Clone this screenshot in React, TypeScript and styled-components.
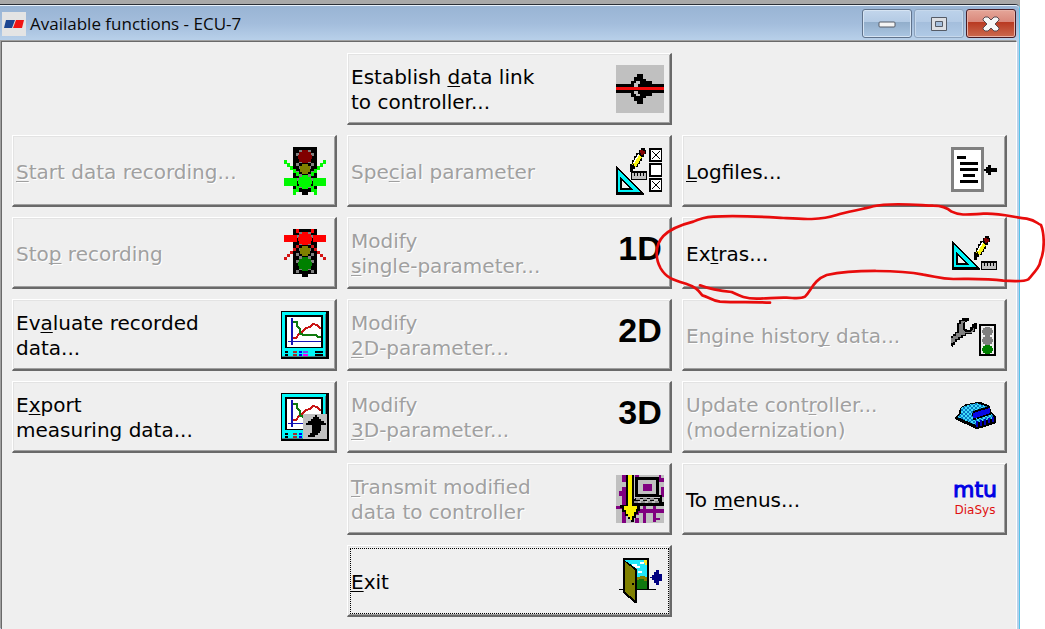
import React from "react";
import styled, { createGlobalStyle, css } from "styled-components";

const GlobalStyle = createGlobalStyle`
  *, *::before, *::after { box-sizing: border-box; }
  body { margin: 0; background: #fff; }
`;

const Desktop = styled.div`
  display: flex;
  flex-direction: column;
  min-height: 100vh;
  margin-right: 25px;
  padding-top: 4px;
  background: #a9a9a9;
`;

const Window = styled.main`
  flex: 1;
  display: flex;
  flex-direction: column;
  border-top: 1px solid #2b2f36;
  border-right: 1px solid #55c4ea;
  border-top-right-radius: 5px;
  background: #b9d1ea;
`;

const TitleBar = styled.header`
  display: flex;
  align-items: center;
  height: 36px;
  padding: 0 3px 0 2px;
  border-top: 1px solid #eaf2fb;
  border-top-right-radius: 4px;
  background: linear-gradient(#99b4d4, #a3bddc 50%, #b9d1ea);
`;

const AppIcon = styled.span`
  display: flex;
  width: 24px;
  height: 24px;
  background: #e4e4e4;
`;

const Title = styled.h1`
  flex: 1;
  margin: 0;
  padding-left: 4px;
  font: 400 17px/24px "Open Sans", "Noto Sans", sans-serif;
  color: #0a0a0a;
`;

const WindowControls = styled.div`
  display: flex;
  gap: 2px;
`;

const controlTones = {
  normal: css`
    border-color: #60738c;
    background: linear-gradient(#c3d6ec, #b3cae4 45%, #92aecb 46%, #abc6e2);
    box-shadow: inset 0 0 0 1px #d6e4f3;
  `,
  muted: css`
    border-color: #8da3bd;
    background: linear-gradient(#bcd2ea, #b3cae5 45%, #a4bedc 46%, #b0cae6);
    box-shadow: inset 0 0 0 1px #c6d8ec;
  `,
  close: css`
    border-color: #471b25;
    background: linear-gradient(#e5a699, #d9877a 45%, #b93a22 46%, #cb6a4f);
    box-shadow: inset 0 0 0 1px #e8b1a6;
  `,
};

const ControlButton = styled.button<{ $tone: keyof typeof controlTones }>`
  display: flex;
  align-items: center;
  justify-content: center;
  width: 50px;
  height: 29px;
  padding: 0;
  border: 1px solid;
  border-radius: 3px;
  ${({ $tone }) => controlTones[$tone]}
`;

const Client = styled.section`
  flex: 1;
  margin: 0 2px 0 1px;
  padding: 11px 9px 11px 10px;
  border: 1px solid #696969;
  border-right-color: #fff;
  border-bottom: 0;
  box-shadow: -1px -1px 0 #a0a0a0;
  background: #efefef;
`;

const FunctionGrid = styled.div`
  display: grid;
  grid-template-columns: repeat(3, 1fr);
  grid-auto-rows: 72px;
  gap: 10px;
`;

const Cell = styled.div<{ $column: number; $row: number }>`
  position: relative;
  display: flex;
  grid-column: ${({ $column }) => $column};
  grid-row: ${({ $row }) => $row};
`;

const FunctionButton = styled.button<{ $focused?: boolean }>`
  flex: 1;
  display: flex;
  align-items: center;
  justify-content: space-between;
  padding: 0 6px 0 1px;
  border: solid;
  border-width: 1px 2px 2px 1px;
  border-color: #fff #696969 #696969 #fff;
  background: #efefef;
  box-shadow: inset 1px 1px 0 #e3e3e3, inset -1px -1px 0 #a0a0a0;
  font: 400 20px/25px "DejaVu Sans", Verdana, sans-serif;
  text-align: left;
  color: #000;
  outline: ${({ $focused }) => ($focused ? "1px dotted #000" : "none")};
  outline-offset: -4px;

  &:disabled {
    color: #a0a0a0;
    text-shadow: 1px 1px 0 #fff;
  }
`;

const Label = styled.span`
  padding: 3px 0 0 2px;
`;

const Line = styled.span`
  display: block;
`;

const Mnemonic = styled.span`
  text-decoration: underline;
  text-decoration-thickness: 1px;
  text-underline-offset: 2px;
  text-decoration-skip-ink: none;
`;

const Icon = styled.svg`
  flex: none;
  width: 48px;
  height: 48px;
  overflow: visible;
  text-shadow: none;
  shape-rendering: crispEdges;
`;

const Marking = styled.svg`
  position: absolute;
  left: -42px;
  top: -27px;
  width: 405px;
  height: 130px;
  z-index: 1;
  pointer-events: none;
`;

/* ---------- icons ---------- */

const PlugIcon = () => (
  <Icon viewBox="0 0 48 48" aria-hidden="true">
    <path fill="#c0c0c0" d="M0 0h48v48H0z" />
    <path d="M0 19h15v-3h3v-4h3V9h6v5h3v2h6v3h12v9H36v3h-6v2h-3v6h-6v-3h-3v-4h-3v-4H0z" />
    <path fill="#c0c0c0" d="M18 18h2v-2h4v3h-2v3h-4zM18 26h4v3h2v2h-4v-2h-2z" />
    <path fill="#f00d0d" d="M0 22h48v3H0z" />
  </Icon>
);

const TrafficIcon = ({ go }: { go?: boolean }) => (
  <Icon viewBox="0 0 48 48" aria-hidden="true">
    <path d="M12 0h24v45h-9v3h-6v-3h-9z" />
    <g fill="#808080">
      {[3, 6, 13, 16, 19, 24, 27, 31, 38, 41].map((y, i) => (
        <React.Fragment key={y}>
          <path d={`M${i % 2 ? 15 : 18} ${y}h3v3h-3z`} />
          <path d={`M${i % 2 ? 30 : 27} ${y}h3v3h-3z`} />
        </React.Fragment>
      ))}
    </g>
    {go ? (
      <g fill="#00f800">
        <path d="M3 31h13v8H3zM32 31h13v8H32z" />
        <path d="M3 13h3v3h3v3h3v3h3v3h3v4h-3v-3h-3v-3h-3v-3H6v-3H3zM45 13h-3v3h-3v3h-3v3h-3v3h-3v4h3v-3h3v-3h3v-3h3v-3h3zM12 42h3v-3h3v6h-3v3h-3zM36 42h-3v-3h-3v6h3v3h3z" />
      </g>
    ) : (
      <g fill="#f00">
        <path d="M3 6h13v7H3zM32 6h13v7H32zM15 0h3v4h-3zM30 0h3v4h-3z" />
        <path
          fill="#d41414"
          d="M3 31v-3h3v-3h3v-3h3v-3h3v-3h3v3h-3v3h-3v3H9v3H6v3zM45 31v-3h-3v-3h-3v-3h-3v-3h-3v-3h-3v3h3v3h3v3h3v3h3v3z"
        />
      </g>
    )}
    <path
      fill={go ? "#800000" : "#f00"}
      d="M21 3h6v2h3v3h1v4h-1v3h-3v1h-6v-1h-3v-3h-1V8h1V5h3z"
    />
    <path fill="#808000" d="M21 17h6v2h2v6h-2v2h-6v-2h-2v-6h2z" />
    <path
      fill={go ? "#00f800" : "#008000"}
      d="M21 28h6v2h3v3h1v4h-1v3h-3v2h-6v-2h-3v-3h-1v-4h1v-3h3z"
    />
  </Icon>
);

const MonitorIcon = ({ exporting }: { exporting?: boolean }) => (
  <Icon viewBox="0 0 48 48" aria-hidden="true">
    <path d="M0 0h48v48H0z" />
    <path fill="#00f8f8" d="M1 1h44v45H1z" />
    <path fill="#40888c" d="M44 3h1v43H1v-1h43z" />
    <path d="M4 4h38v33H4z" />
    <path fill="#fff" d="M6 6h34v30H6z" />
    <path fill="#1414b4" d="M10 7h2v27h-2zM7 30h33v1H7z" />
    <g fill="none" strokeWidth="2">
      <path stroke="#c81414" d="M12 27h3l3-4 3-2 4-4 4-1 3-3 4 1 4 4" />
      <path stroke="#107a10" d="M12 11h4v4l3 3v4l3 2h13l2 2h3" />
    </g>
    <path d="M4 40h3v2H4zM4 43h3v2H4zM34 40h8v2h-8zM34 43h8v2h-8z" />
    <path fill="#a03030" d="M12 40h4v2h-4zM12 43h4v2h-4z" />
    <path fill="#0000f8" d="M18 40h3v2h-3zM18 43h3v2h-3z" />
    <path fill="#7048f0" d="M22 40h5v2h-5z" />
    <path fill="#f000f0" d="M22 43h5v2h-5z" />
    {exporting && (
      <>
        <path fill="#c0c0c0" d="M22 21h24v25H22z" />
        <path d="M34 22h2v2h2v2h2v2h3v2h2v2h-5v6h-1v2h-2v2h-3v2h-7v-2h2v-2h2v-8h-6v-2h2v-2h3v-2h2v-2h2z" />
      </>
    )}
  </Icon>
);

const Triangle = ({ x, y }: { x: number; y: number }) => (
  <g transform={`translate(${x} ${y})`}>
    <path d="M0 0l28 27v2H0z" />
    <path fill="#00f4f8" d="M2 4l22 22H2z" />
    <path d="M4 11l14 13H4z" />
    <path fill="#efefef" d="M6 15l7 7H6z" />
  </g>
);

const Pencil = ({ x, y }: { x: number; y: number }) => (
  <g transform={`translate(${x} ${y})`}>
    <path d="M0 23v-7h2v-4h2V8h2V5h3V2h2V0h4v2h1v4h-2v3h-2v4h-2v3H8v3H5v2H3v3H0z" />
    <path fill="#f8f410" d="M2 17l6-11 4 3-6 10-2-1v-2z" />
    <path fill="#fff" d="M3 15l5-9 1 1-5 9z" />
    <path fill="#800000" d="M10 2h3v1h2v3h-2v1h-2V5h-1z" />
  </g>
);

const Ruler = ({ x, y }: { x: number; y: number }) => (
  <g transform={`translate(${x} ${y})`}>
    <path d="M0 0h16v9H0z" />
    <path fill="#c0c0c0" d="M1 2h14v6H1z" />
    <path d="M3 2h1v3H3zM6 2h1v3H6zM9 2h1v3H9zM12 2h1v3h-1z" />
  </g>
);

const SpecialIcon = () => (
  <Icon viewBox="0 0 48 48" aria-hidden="true">
    <Triangle x={0} y={19} />
    <Ruler x={15} y={24} />
    <Pencil x={14} y={1} />
    {[1, 16, 31].map((y) => (
      <g key={y} transform={`translate(33 ${y})`}>
        <path d="M0 0h13v14H0z" />
        <path fill="#fff" d="M2 2h10v10H2z" />
        {y !== 16 && <path stroke="#000" d="M3 3l8 8M11 3l-8 8" />}
      </g>
    ))}
  </Icon>
);

const ExtrasIcon = () => (
  <Icon viewBox="0 0 48 48" aria-hidden="true">
    <Triangle x={1} y={12} />
    <Ruler x={30} y={32} />
    <Pencil x={23} y={7} />
  </Icon>
);

const LogIcon = () => (
  <Icon viewBox="0 0 48 48" aria-hidden="true">
    <path fill="#808080" d="M0 0h33v45H0z" />
    <path fill="#fff" d="M3 3h27v39H3z" />
    <path d="M6 9h9v3H6zM9 15h18v3H9zM9 21h18v3H9zM12 27h12v3H12zM9 33h18v3H9z" />
    <path d="M33 22h2v-2h2v-2h3v3h6v4h-6v3h-3v-2h-2v-2h-2z" />
  </Icon>
);

const WrenchIcon = () => (
  <Icon viewBox="0 0 48 48" aria-hidden="true">
    <path d="M0 34v-9h2v-2h2v-2h2v-9h2v-3h3V7h7v3h-2v1h-2v7h2v1h3v-3h2v-3h2v-1h3v6h-2v3h-3v2h-6v2h-3v2H9v2H6v2H4v3H2v3z" />
    <path
      fill="#808080"
      d="M0 32v-5h2v-2h3v-3h3v-9h2v-3h4l-2 2v6l2 3h5l3-2v-2h1v2l-3 3h-6v2h-4v2H7v2H4v3z"
    />
    <path d="M28 13h17v32H28z" />
    <path fill="#efefef" d="M30 15h13v28H30z" />
    {[16, 25, 34].map((y) => (
      <path
        key={y}
        fill={y === 34 ? "#008000" : "#808080"}
        d={`M34 ${y}h5v1h2v2h1v3h-1v2h-2v1h-5v-1h-2v-2h-1v-3h1v-2h2z`}
      />
    ))}
  </Icon>
);

const ChipIcon = () => (
  <Icon viewBox="0 0 48 48" aria-hidden="true">
    <defs>
      <pattern id="weave" width="4" height="4" patternUnits="userSpaceOnUse">
        <path fill="#0a78c4" d="M0 0h4v4H0z" />
        <path fill="#40e0f8" d="M0 0h2v2H0zM2 2h2v2H2z" />
      </pattern>
    </defs>
    <path d="M4 24l4-4 1-5 6-4 7-1 4-1h4l9 4 1 6 5 5v6l-5 2-4 1-5 2-6 1L4 26z" />
    <path
      fill="url(#weave)"
      d="M6 24l4-4V15l7-3 9-2 11 4-15 4-1 5 6 3 14-5 2 4-14 5-4 2z"
    />
    <path fill="#0808e8" d="M22 20l17-5v5l-14 5h-3z" />
    <path d="M22 18l17-5v2l-17 5zM22 25h3v2h-3z" />
    <path fill="#0000c0" d="M25 28h2v6h-2zM29 27h2v6h-2zM33 26h2v6h-2zM37 25h2v5h-2zM41 24h2v5h-2z" />
    <path d="M27 29h2v5h-2zM31 28h2v5h-2zM35 27h2v5h-2zM39 26h2v5h-2z" />
  </Icon>
);

const TransmitIcon = () => (
  <Icon viewBox="0 0 48 48" aria-hidden="true">
    <path fill="#c0c0c0" d="M0 0h48v48H0z" />
    <path
      fill="#800080"
      d="M6 0h4v48H6zM3 16h4v5H3zM0 31h6v3H0zM19 0h4v48h-4zM27 30h3v18h-3zM37 30h3v17h-3zM23 34h25v4H23zM43 3h5v4h-5zM43 0h2v5h-2zM45 12h3v10h-3zM40 43h4v2h-4z"
    />
    <path fill="#c0c0c0" d="M6 7h4v5H6zM19 40h4v3h-4zM30 41h4v3h-4z" />
    <path d="M19 2h24v18h3v7h2v4H18v-4h-2v-3h3z" />
    <path fill="#c0c0c0" d="M22 5h18v14H22zM19 22h25v1H19z" />
    <path fill="#800080" d="M27 9h9v7h-9z" />
    <path fill="#909090" d="M20 23h4v2h-4zM27 23h4v2h-4zM34 23h4v2h-4zM18 26h4v2h-4zM25 26h4v2h-4zM32 26h4v2h-4zM39 26h4v2h-4z" />
    <path fill="#c0c0c0" d="M24 24h3v2h-3zM31 24h3v2h-3zM38 24h4v2h-4zM22 26h3v2h-3zM29 26h3v2h-3zM36 26h3v2h-3z" />
    <path d="M10 0h8v30h6v6h-2v3h-2v4h-2v4h-3v-3h-3v-3H9v-4H6v-4H4v-3h6z" />
    <path fill="#f8f000" d="M12 0h4v31h5v3h-1v3h-2v4h-2v4h-2v-3h-2v-3h-2v-4H8v-4h4z" />
  </Icon>
);

const ExitIcon = () => (
  <Icon viewBox="0 0 48 48" aria-hidden="true">
    <path d="M7 1h26v31h7v1H3v-1h4z" />
    <path fill="#20e8f8" d="M9 3h22v29H9z" />
    <path fill="#fff" d="M16 7h5v2h3v2h-6V9h-2zM24 5h4v2h-4zM22 14h4v2h-4z" />
    <path fill="#f8e820" d="M28 3h3v5h-2V6h-1z" />
    <path fill="#808000" d="M21 20h3v-1h5v1h2v6H21z" />
    <path fill="#107810" d="M21 23h2v-1h5v2h3v8H21z" />
    <path d="M7 2l14 10v34h-2L7 36z" />
    <path fill="#808000" d="M9 5l10 8v30L9 35z" />
    <path d="M16 26h2v2h-2z" />
    <path fill="#000080" d="M34 20h2v-2h2v-3h2v-2h3v4h3v7h-3v4h-3v-2h-2v-3h-2v-2h-2z" />
  </Icon>
);

const DimensionIcon = ({ text }: { text: string }) => (
  <Icon viewBox="0 0 48 48">
    <text
      x="24"
      y="31"
      textAnchor="middle"
      fontFamily="'Liberation Sans', Arial, sans-serif"
      fontSize="34"
      fontWeight="700"
    >
      {text}
    </text>
  </Icon>
);

const MtuIcon = () => (
  <Icon viewBox="0 0 48 48" fontFamily="'DejaVu Sans', Verdana, sans-serif" textAnchor="middle">
    <text x="24" y="22" fontSize="22" fill="#0000e4" stroke="#0000e4">
      mtu
    </text>
    <text x="24" y="39" fontSize="12" fill="#e01010">
      DiaSys
    </text>
  </Icon>
);

/* ---------- functions ---------- */

type FunctionEntry = {
  column: number;
  row: number;
  /* an ampersand stands before the letter that is the access key */
  label: string;
  icon: React.ReactNode;
  disabled?: boolean;
  focused?: boolean;
  marked?: boolean;
};

const functions: FunctionEntry[] = [
  { column: 2, row: 1, label: "Establish &data link\nto controller...", icon: <PlugIcon /> },
  { column: 1, row: 2, label: "&Start data recording...", icon: <TrafficIcon go />, disabled: true },
  { column: 2, row: 2, label: "Spe&cial parameter", icon: <SpecialIcon />, disabled: true },
  { column: 3, row: 2, label: "&Logfiles...", icon: <LogIcon /> },
  { column: 1, row: 3, label: "Sto&p recording", icon: <TrafficIcon />, disabled: true },
  { column: 2, row: 3, label: "Modify\n&single-parameter...", icon: <DimensionIcon text="1D" />, disabled: true },
  { column: 3, row: 3, label: "Ex&tras...", icon: <ExtrasIcon />, marked: true },
  { column: 1, row: 4, label: "Ev&aluate recorded\ndata...", icon: <MonitorIcon /> },
  { column: 2, row: 4, label: "Modify\n&2D-parameter...", icon: <DimensionIcon text="2D" />, disabled: true },
  { column: 3, row: 4, label: "Engine histor&y data...", icon: <WrenchIcon />, disabled: true },
  { column: 1, row: 5, label: "E&xport\nmeasuring data...", icon: <MonitorIcon exporting /> },
  { column: 2, row: 5, label: "Modify\n&3D-parameter...", icon: <DimensionIcon text="3D" />, disabled: true },
  { column: 3, row: 5, label: "Update cont&roller...\n(modernization)", icon: <ChipIcon />, disabled: true },
  { column: 2, row: 6, label: "&Transmit modified\ndata to controller", icon: <TransmitIcon />, disabled: true },
  { column: 3, row: 6, label: "To &menus...", icon: <MtuIcon /> },
  { column: 2, row: 7, label: "&Exit", icon: <ExitIcon />, focused: true },
];

const LabelText = ({ text }: { text: string }) => (
  <Label>
    {text.split("\n").map((line) => {
      const [before, after] = line.split("&");
      return (
        <Line key={line}>
          {before}
          {after && <Mnemonic>{after[0]}</Mnemonic>}
          {after && after.slice(1)}
        </Line>
      );
    })}
  </Label>
);

const RedMarking = () => (
  <Marking viewBox="0 0 1215 390" aria-hidden="true">
    <path
      fill="none"
      stroke="#e80c0c"
      strokeWidth="8"
      strokeLinecap="round"
      strokeLinejoin="round"
      d="M180 286C210 298 240 303 275 306C300 318 315 326 350 326C390 325 410 322 440 323C465 324 480 328 495 320C515 300 520 270 560 255C640 238 780 240 850 254C890 260 900 267 940 267C1000 267 1040 265 1090 272C1120 274 1150 276 1165 268C1185 245 1200 230 1202 210C1215 180 1213 130 1203 105C1190 100 1190 92 1160 86C1120 82 1080 68 1030 71C990 73 960 78 935 65C920 52 905 47 880 47C830 45 750 36 700 49C660 60 620 65 590 75C540 92 480 87 430 84C360 80 290 75 220 80C190 82 175 88 160 95C120 105 90 118 70 138C45 165 45 205 62 235C80 265 100 270 140 282C165 290 175 300 187 316C205 320 215 332 240 335C290 338 340 335 390 338"
    />
  </Marking>
);

export default function App() {
  return (
    <>
      <GlobalStyle />
      <Desktop>
        <Window>
          <TitleBar>
            <AppIcon>
              <svg viewBox="0 0 24 24" aria-hidden="true">
                <path fill="#1c4692" d="M4 8h9l-3 8H2z" />
                <path fill="#f01414" d="M14 8h8l-2 8h-9z" />
              </svg>
            </AppIcon>
            <Title>Available functions - ECU-7</Title>
            <WindowControls>
              <ControlButton $tone="normal" aria-label="Minimize">
                <svg width="18" height="8" viewBox="0 0 18 8">
                  <rect x="1" y="2" width="16" height="5" rx="1" fill="#f4f4f4" stroke="#555b66" />
                </svg>
              </ControlButton>
              <ControlButton $tone="muted" aria-label="Maximize" disabled>
                <svg width="18" height="16" viewBox="0 0 18 16">
                  <path
                    fill="#dcdfe4"
                    fillRule="evenodd"
                    stroke="#555b66"
                    d="M1.5 1.5h15v13h-15zM5.500 5.500v5h7v-5z"
                  />
                </svg>
              </ControlButton>
              <ControlButton $tone="close" aria-label="Close">
                <svg width="18" height="16" viewBox="0 0 18 16">
                  <path
                    fill="#f6f6f6"
                    stroke="#5a4a50"
                    strokeLinejoin="round"
                    d="M1 3l2-2h3l3 3 3-3h3l2 2v1l-4 4 4 4v1l-2 2h-3l-3-3-3 3H3l-2-2v-1l4-4-4-4z"
                  />
                </svg>
              </ControlButton>
            </WindowControls>
          </TitleBar>
          <Client>
            <FunctionGrid>
              {functions.map((entry) => (
                <Cell key={entry.label} $column={entry.column} $row={entry.row}>
                  <FunctionButton disabled={entry.disabled} $focused={entry.focused}>
                    <LabelText text={entry.label} />
                    {entry.icon}
                  </FunctionButton>
                  {entry.marked && <RedMarking />}
                </Cell>
              ))}
            </FunctionGrid>
          </Client>
        </Window>
      </Desktop>
    </>
  );
}
